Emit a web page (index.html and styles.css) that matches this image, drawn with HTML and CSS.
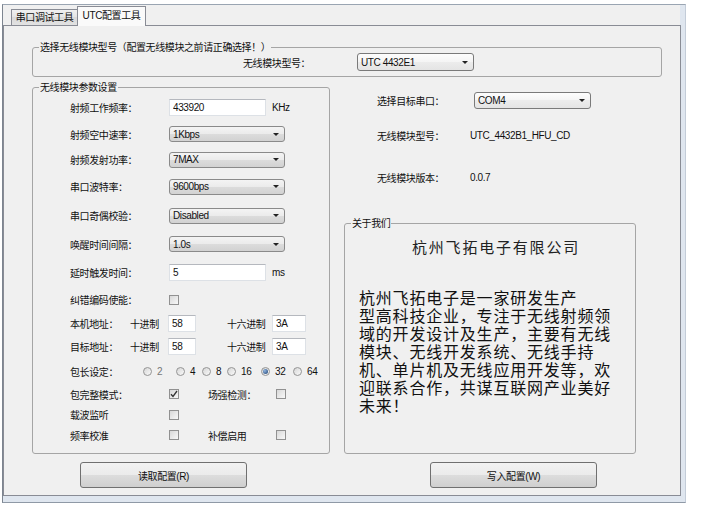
FILE: index.html
```html
<!DOCTYPE html>
<html lang="zh-CN">
<head>
<meta charset="UTF-8">
<title>UTC配置工具</title>
<link rel="stylesheet" href="styles.css">
</head>
<body>

<div class="window">
    <div class="tabs">
        <div class="tab">串口调试工具</div>
        <div class="tab active">UTC配置工具</div>
    </div>

    <div class="panel">
        <!-- 模块型号选择 -->
        <div class="group module-group">
            <span class="group-title">选择无线模块型号（配置无线模块之前请正确选择！）</span>
            <span class="module-label">无线模块型号：</span>
            <div class="combo combo-light module-combo"><span>UTC 4432E1</span><i class="arrow"></i></div>
        </div>

        <div class="columns">
            <!-- 参数设置 -->
            <div class="group params">
                <span class="group-title">无线模块参数设置</span>

                <div class="prow">
                    <span class="plabel">射频工作频率：</span>
                    <input class="field" type="text" value="433920">
                    <span class="unit">KHz</span>
                </div>
                <div class="prow">
                    <span class="plabel">射频空中速率：</span>
                    <div class="combo"><span>1Kbps</span><i class="arrow"></i></div>
                </div>
                <div class="prow">
                    <span class="plabel">射频发射功率：</span>
                    <div class="combo"><span>7MAX</span><i class="arrow"></i></div>
                </div>
                <div class="prow">
                    <span class="plabel">串口波特率：</span>
                    <div class="combo"><span>9600bps</span><i class="arrow"></i></div>
                </div>
                <div class="prow">
                    <span class="plabel">串口奇偶校验：</span>
                    <div class="combo"><span>Disabled</span><i class="arrow"></i></div>
                </div>
                <div class="prow">
                    <span class="plabel">唤醒时间间隔：</span>
                    <div class="combo"><span>1.0s</span><i class="arrow"></i></div>
                </div>
                <div class="prow">
                    <span class="plabel">延时触发时间：</span>
                    <input class="field" type="text" value="5">
                    <span class="unit">ms</span>
                </div>
                <div class="prow check-row">
                    <span>纠错编码使能：</span>
                    <span class="check"></span>
                </div>
                <div class="prow">
                    <span class="addr-label">本机地址：</span>
                    <span class="addr-sub">十进制</span>
                    <input class="field addr" type="text" value="58">
                    <span class="addr-sub hex-label">十六进制</span>
                    <input class="field addr hex" type="text" value="3A">
                </div>
                <div class="prow">
                    <span class="addr-label">目标地址：</span>
                    <span class="addr-sub">十进制</span>
                    <input class="field addr" type="text" value="58">
                    <span class="addr-sub hex-label">十六进制</span>
                    <input class="field addr hex" type="text" value="3A">
                </div>
                <div class="prow">
                    <span class="radio-label">包长设定：</span>
                    <div class="radios">
                        <span class="radio-item faded"><i class="radio"></i>2</span>
                        <span class="radio-item"><i class="radio"></i>4</span>
                        <span class="radio-item"><i class="radio"></i>8</span>
                        <span class="radio-item"><i class="radio"></i>16</span>
                        <span class="radio-item"><i class="radio on"></i>32</span>
                        <span class="radio-item"><i class="radio"></i>64</span>
                    </div>
                </div>
                <div class="prow check-row">
                    <span>包完整模式：</span>
                    <span class="check">
                        <svg width="8" height="8" viewBox="0 0 8 8"><path d="M1 4.2 3 6.5 7 1" fill="none" stroke="#333" stroke-width="1.3"/></svg>
                    </span>
                    <span>场强检测：</span>
                    <span class="check"></span>
                </div>
                <div class="prow check-row">
                    <span>载波监听</span>
                    <span class="check"></span>
                </div>
                <div class="prow check-row">
                    <span>频率校准</span>
                    <span class="check"></span>
                    <span>补偿启用</span>
                    <span class="check"></span>
                </div>
            </div>

            <!-- 右侧信息 -->
            <div class="side">
                <div class="side-rows">
                    <div class="side-row">
                        <span class="side-label">选择目标串口：</span>
                        <div class="combo combo-light port-combo"><span>COM4</span><i class="arrow"></i></div>
                    </div>
                    <div class="side-row">
                        <span class="side-label">无线模块型号：</span>
                        <span class="side-value">UTC_4432B1_HFU_CD</span>
                    </div>
                    <div class="side-row">
                        <span class="side-label">无线模块版本：</span>
                        <span class="side-value">0.0.7</span>
                    </div>
                </div>

                <div class="group about">
                    <span class="group-title">关于我们</span>
                    <div class="company">杭州飞拓电子有限公司</div>
                    <div class="about-text">
                        杭州飞拓电子是一家研发生产<br>
                        型高科技企业，专注于无线射频领<br>
                        域的开发设计及生产，主要有无线<br>
                        模块、无线开发系统、无线手持<br>
                        机、单片机及无线应用开发等，欢<br>
                        迎联系合作，共谋互联网产业美好<br>
                        未来！
                    </div>
                </div>
            </div>
        </div>

        <div class="actions">
            <button class="btn" type="button">读取配置(R)</button>
            <button class="btn" type="button">写入配置(W)</button>
        </div>
    </div>
</div>

</body>
</html>
```

FILE: styles.css
```css
* {
    box-sizing: border-box;
}
body {
    margin: 0;
    background: #fff;
    font: 10px "Liberation Sans", "Noto Sans CJK SC", sans-serif;
    letter-spacing: -0.4px;
    color: #111;
}

.window {
    margin: 4px 0 0 2px;
    width: 684px;
    height: 499px;
    background: #f0f0f0;
    border-top: 1px solid #9aa5b2;
    border-left: 1px solid #7d8590;
    border-right: 1px solid #c3ccd8;
    border-bottom: 1px solid #8f99a6;
    box-shadow: inset -5px -6px 0 #dfe6ef;
}

/* tabs */
.tabs {
    display: flex;
    align-items: flex-end;
    height: 20px;
    padding-left: 8px;
}
.tab {
    width: 67px;
    height: 16px;
    line-height: 16px;
    text-align: center;
    border: 1px solid #898c95;
    border-bottom: 0;
    background: linear-gradient(#f0f0f0, #e4e4e4 50%, #dadada 50%, #e2e2e2);
}
.tab.active {
    position: relative;
    z-index: 1;
    width: 69px;
    height: 20px;
    line-height: 17px;
    margin-left: -1px;
    margin-bottom: -1px;
    background: #fafafa;
}

.panel {
    width: 678px;
    height: 471px;
    border: 1px solid #898c95;
    background: #f0f0f0;
    padding: 21px 0 0 28px;
}

/* group boxes */
.group {
    position: relative;
    border: 1px solid #a5a5a5;
    border-radius: 3px;
}
.group-title {
    position: absolute;
    top: -7px;
    left: 6px;
    padding: 0 1px;
    line-height: 13px;
    background: #f0f0f0;
}

.module-group {
    width: 630px;
    height: 30px;
    display: flex;
    align-items: center;
    padding-left: 210px;
}
.module-label {
    width: 114px;
}

.columns {
    display: flex;
    gap: 14px;
    margin-top: 10px;
}

/* controls */
.combo {
    display: flex;
    align-items: center;
    justify-content: space-between;
    width: 116px;
    height: 16px;
    padding: 0 5px 0 3px;
    border: 1px solid #8a8a8a;
    border-radius: 3px;
    background: linear-gradient(#f4f4f4, #ebebeb 50%, #dcdcdc 50%, #d2d2d2);
}
.combo-light {
    border-color: #7a7a7a;
    background: linear-gradient(#fdfdfd, #f4f4f4 50%, #ececec 50%, #e4e4e4);
}
.module-combo {
    width: 117px;
    height: 18px;
}
.port-combo {
    width: 117px;
    height: 17px;
}
.arrow {
    width: 0;
    height: 0;
    border-left: 3px solid transparent;
    border-right: 3px solid transparent;
    border-top: 3px solid #222;
}

.field {
    width: 97px;
    height: 17px;
    padding: 0 3px;
    border: 1px solid #dde1e6;
    border-top-color: #b5b8be;
    background: #fff;
    font: inherit;
    letter-spacing: inherit;
    color: #111;
    outline: none;
}
.unit {
    margin-left: 6px;
}

.check {
    display: flex;
    align-items: center;
    justify-content: center;
    width: 10px;
    height: 10px;
    border: 1px solid #919191;
    background: linear-gradient(135deg, #d8d8d8, #f8f8f8);
}

.radio {
    display: inline-flex;
    align-items: center;
    justify-content: center;
    width: 9px;
    height: 9px;
    margin-right: 5px;
    border: 1px solid #949494;
    border-radius: 50%;
    background: linear-gradient(135deg, #d6d6d6, #fafafa);
}
.radio.on::after {
    content: "";
    width: 5px;
    height: 5px;
    border-radius: 50%;
    background: radial-gradient(circle at 35% 35%, #8fb4e0, #1d3f6e);
}

/* parameter rows */
.params {
    width: 298px;
    height: 367px;
    padding: 5px 0 0 37px;
    display: grid;
    grid-template-rows: 28px 26px 25px 29px 29px 28px 29px 25px 22px 25px 25px 20px 21px 20px;
    align-content: start;
}
.prow {
    display: flex;
    align-items: center;
}
.plabel {
    width: 99px;
}
.check-row {
    display: grid;
    grid-template-columns: 99px 39px 68px 10px;
    align-items: center;
}
.addr-label {
    width: 60px;
}
.addr-sub {
    width: 38px;
}
.hex-label {
    width: 45px;
    margin-left: 31px;
}
.field.addr {
    width: 28px;
}
.field.addr.hex {
    width: 34px;
}
.radio-label {
    width: 73px;
}
.radios {
    display: grid;
    grid-template-columns: 33px 26px 25px 34px 32px auto;
}
.radio-item {
    display: flex;
    align-items: center;
}
.radio-item.faded {
    color: #777;
}

/* right column */
.side {
    width: 292px;
}
.side-rows {
    display: grid;
    grid-template-rows: 26px 44px 40px;
    padding-left: 33px;
}
.side-row {
    display: flex;
    align-items: center;
}
.side-label {
    width: 97px;
}
.side-value {
    margin-left: -4px;
}

.about {
    height: 231px;
    margin-top: 26px;
}
.company {
    padding: 14px 0 0 12px;
    text-align: center;
    font-size: 15px;
    line-height: 20px;
    letter-spacing: 1.8px;
    color: #222;
}
.about-text {
    margin-top: 32px;
    padding-left: 14px;
    font-size: 16px;
    line-height: 18px;
    letter-spacing: 0.8px;
    color: #111;
}

/* buttons */
.actions {
    display: flex;
    gap: 183px;
    margin: 8px 0 0 48px;
}
.btn {
    width: 167px;
    height: 26px;
    border: 1px solid #707070;
    border-radius: 3px;
    background: linear-gradient(#f2f2f2, #ebebeb 50%, #dddddd 50%, #cfcfcf);
    font: inherit;
    letter-spacing: inherit;
    color: #111;
}
```
